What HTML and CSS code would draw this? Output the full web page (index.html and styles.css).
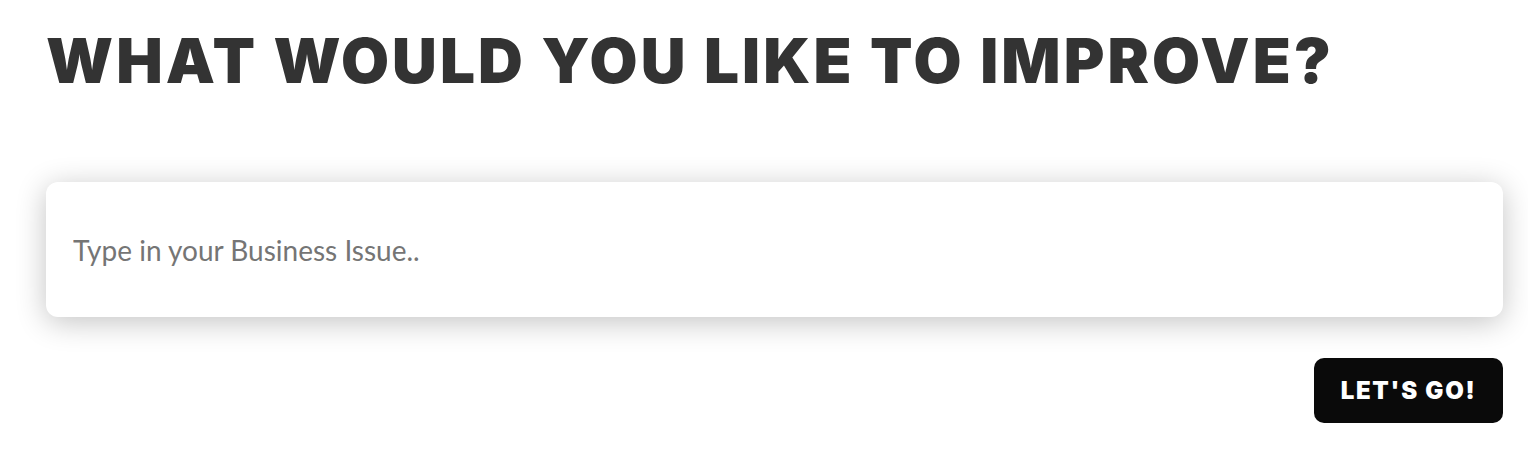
FILE: index.html
```html
<!DOCTYPE html>
<html lang="en">

<head>
    <meta charset="UTF-8">
    <meta name="viewport" content="width=device-width, initial-scale=1.0">
    <title>What would you like to improve?</title>
    <link rel="stylesheet" href="styles.css">
</head>

<body>
    <div class="container">
        <h1>What would you like to improve?</h1>

        <input type="text" class="issue" placeholder="Type in your Business Issue.." />

        <div class="actions">
            <button type="button" class="go">Let's go!</button>
        </div>
    </div>
</body>

</html>
```

FILE: styles.css
```css
body {
    margin: 0;
    background-color: #fff;
    font-family: Lato, 'Open Sans', sans-serif;
}

.container {
    padding: 21px 25px 0 46px;
}

h1 {
    margin: 0;
    font-family: Inter, 'Open Sans', sans-serif;
    font-weight: 900;
    font-size: 62px;
    line-height: 80px;
    letter-spacing: 3.1px;
    text-transform: uppercase;
    color: #333;
}

.issue {
    display: block;
    box-sizing: border-box;
    width: 100%;
    height: 135px;
    margin-top: 81px;
    padding: 0 27px;
    border: none;
    border-radius: 12px;
    background-color: #fff;
    box-shadow: 0 5px 30px rgba(0, 0, 0, 0.24);
    font-family: Lato, sans-serif;
    font-size: 28px;
    color: #333;
    outline: none;
}

.issue::placeholder {
    color: #757575;
}

.actions {
    display: flex;
    justify-content: flex-end;
    margin-top: 41px;
}

.go {
    width: 189px;
    height: 65px;
    padding: 0;
    border: none;
    border-radius: 10px;
    background-color: #0a0a0a;
    color: #fff;
    font-family: Inter, sans-serif;
    font-weight: 900;
    font-size: 24px;
    letter-spacing: 1.7px;
    text-transform: uppercase;
    cursor: pointer;
}
```
